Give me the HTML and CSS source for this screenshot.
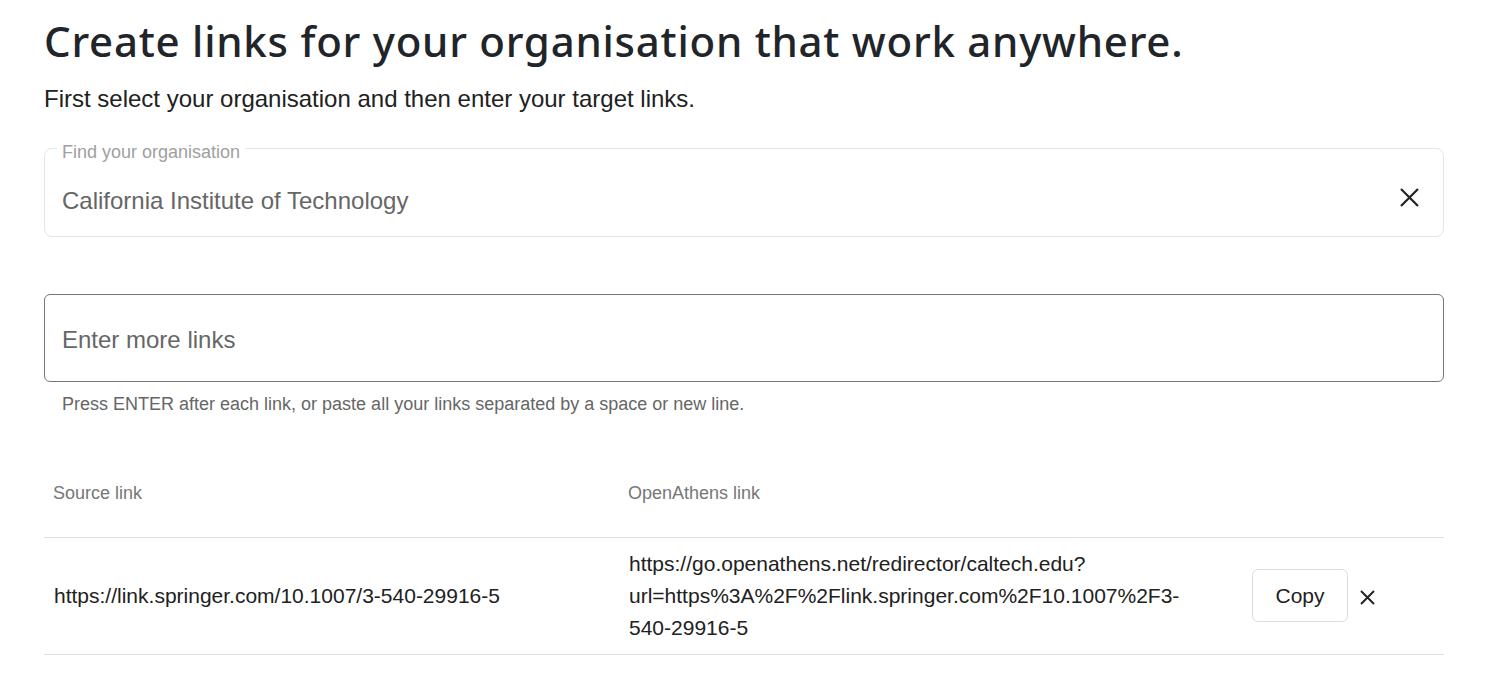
FILE: index.html
```html
<!DOCTYPE html>
<html lang="en">
<head>
<meta charset="utf-8">
<title>Create links</title>
<link rel="stylesheet" href="styles.css">
</head>
<body>
<main class="page">
  <h1 class="title">Create links for your organisation that work anywhere.</h1>
  <p class="lead">First select your organisation and then enter your target links.</p>

  <fieldset class="org-field">
    <legend class="org-legend">Find your organisation</legend>
    <div class="org-row">
      <span class="org-value">California Institute of Technology</span>
      <button class="icon-btn org-clear" type="button" aria-label="Clear">
        <svg class="x-lg" viewBox="0 0 19 19" width="19" height="19"><path d="M1 1L18 18M18 1L1 18" stroke="#222" stroke-width="2.2" fill="none"/></svg>
      </button>
    </div>
  </fieldset>

  <input class="links-input" type="text" placeholder="Enter more links">
  <p class="helper">Press ENTER after each link, or paste all your links separated by a space or new line.</p>

  <table class="links-table">
    <colgroup>
      <col class="c1"><col class="c2"><col class="c3">
    </colgroup>
    <thead>
      <tr><th>Source link</th><th>OpenAthens link</th><th></th></tr>
    </thead>
    <tbody>
      <tr>
        <td>https://link.springer.com/10.1007/3-540-29916-5</td>
        <td class="oa-cell">https://go.openathens.net/redirector/caltech.edu?<wbr>url=https%3A%2F%2Flink.springer.com%2F10.1007%2F3-<wbr>540-29916-5</td>
        <td>
          <div class="actions">
            <button class="copy-btn" type="button">Copy</button>
            <button class="icon-btn row-remove" type="button" aria-label="Remove">
              <svg viewBox="0 0 15 15" width="15" height="15"><path d="M1 1L14 14M14 1L1 14" stroke="#222" stroke-width="1.9" fill="none"/></svg>
            </button>
          </div>
        </td>
      </tr>
    </tbody>
  </table>
</main>
</body>
</html>
```
FILE: styles.css
```css
* { box-sizing: border-box; }
html, body { margin: 0; padding: 0; background: #fff; }
body {
  font-family: "Liberation Sans", Arial, sans-serif;
  color: #212121;
}
.page { padding: 0 44px; }

.title {
  margin: 17px 0 0;
  font-family: "Noto Sans", "Open Sans", sans-serif;
  font-weight: 500;
  font-size: 42px;
  line-height: 48px;
  color: #212529;
  letter-spacing: 0.75px;
}
.lead {
  margin: 20px 0 0;
  font-size: 24px;
  line-height: 27.6px;
  color: #212121;
}

.org-field {
  margin: 22px 0 0;
  padding: 0 12px;
  border: 1px solid #e6e6e6;
  border-radius: 8px;
  min-inline-size: 0;
}
.org-legend {
  padding: 7px 5px 0;
  font-size: 18px;
  line-height: 20px;
  color: #a0a0a0;
}
.org-row {
  height: 74px;
  display: flex;
  align-items: center;
  justify-content: space-between;
  padding-left: 5px;
}
.org-value {
  font-size: 24px;
  line-height: 28px;
  padding-top: 4px;
  color: #666;
}
.icon-btn {
  border: 0;
  background: none;
  padding: 0;
  margin: 0;
  display: flex;
  cursor: pointer;
}
.org-clear { margin-right: 12px; margin-bottom: 3px; }

.links-input {
  display: block;
  width: 100%;
  height: 88px;
  margin: 57px 0 0;
  padding: 4px 17px 0;
  border: 1px solid #767676;
  border-radius: 6px;
  font-family: "Liberation Sans", Arial, sans-serif;
  font-size: 24px;
  color: #212121;
  background: #fff;
  outline: none;
}
.links-input::placeholder { color: #666; opacity: 1; }

.helper {
  margin: 13px 0 0 18px;
  font-size: 18px;
  line-height: 18px;
  color: #666;
}

.links-table {
  width: 100%;
  margin-top: 54px;
  border-collapse: collapse;
  table-layout: fixed;
}
.c1 { width: 575px; }
.c2 { width: 623px; }
.links-table th {
  text-align: left;
  font-weight: 400;
  font-size: 18px;
  line-height: 21px;
  color: #767676;
  padding: 16px 9px 33px;
  border-bottom: 1px solid #e0e0e0;
}
.links-table td {
  padding: 10px;
  font-size: 21px;
  line-height: 32px;
  color: #212121;
  vertical-align: middle;
  border-bottom: 1px solid #e0e0e0;
}
.links-table td.oa-cell { padding-right: 40px; }
.actions {
  display: flex;
  align-items: center;
}
.copy-btn {
  font-family: "Liberation Sans", Arial, sans-serif;
  font-size: 21px;
  line-height: 24px;
  padding: 14px 22px 13px;
  height: 53px;
  width: 96px;
  border: 1px solid #dedede;
  border-radius: 6px;
  background: #fff;
  color: #212121;
  cursor: pointer;
}
.row-remove { margin-left: 12px; margin-top: 4px; }
```
